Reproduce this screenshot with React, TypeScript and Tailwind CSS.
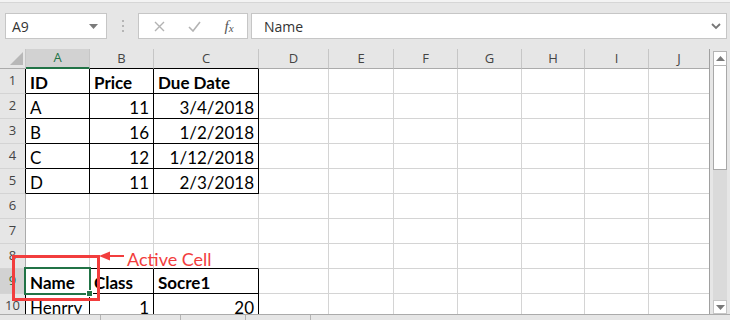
import React from 'react';

const COLS = ['A', 'B', 'C', 'D', 'E', 'F', 'G', 'H', 'I', 'J'];

type Cell = { v: string; right?: boolean };

const DATA: Record<number, Cell[]> = {
  1: [{ v: 'ID' }, { v: 'Price' }, { v: 'Due Date' }],
  2: [{ v: 'A' }, { v: '11', right: true }, { v: '3/4/2018', right: true }],
  3: [{ v: 'B' }, { v: '16', right: true }, { v: '1/2/2018', right: true }],
  4: [{ v: 'C' }, { v: '12', right: true }, { v: '1/12/2018', right: true }],
  5: [{ v: 'D' }, { v: '11', right: true }, { v: '2/3/2018', right: true }],
  9: [{ v: 'Name' }, { v: 'Class' }, { v: 'Socre1' }],
  10: [{ v: 'Henrry' }, { v: '1', right: true }, { v: '20', right: true }],
};

const BOLD_ROWS = [1, 9];
const TABLE_ROWS = [1, 2, 3, 4, 5, 9, 10];

function TopBar() {
  return (
    <div className="h-[49px] bg-[#e6e6e6] border-t-[2px] border-t-[#f3f3f3]">
      <div className="h-px bg-[#d6d6d6]" />
      {/* name box + formula bar */}
      <div className="flex items-start pt-[10px] pl-[5px]">
        <div className="flex h-[26px] w-[102px] items-center justify-between border border-[#c6c6c6] bg-white pl-[6px] pr-[8px]">
          <span className="text-[14px] text-[#333] font-['Open_Sans',sans-serif]">A9</span>
          <svg width="9" height="5" viewBox="0 0 9 5">
            <path d="M0 0 L9 0 L4.5 5 Z" fill="#7a7a7a" />
          </svg>
        </div>
        <div className="flex h-[26px] w-[31px] flex-col items-center justify-center gap-[3px]">
          <span className="h-[2px] w-[2px] bg-[#b5b5b5]" />
          <span className="h-[2px] w-[2px] bg-[#b5b5b5]" />
          <span className="h-[2px] w-[2px] bg-[#b5b5b5]" />
        </div>
        <div className="flex h-[26px] w-[110px] items-center border border-[#c6c6c6] bg-white">
          <div className="flex w-[38px] justify-center pl-[2px]">
            <svg width="11" height="11" viewBox="0 0 11 11">
              <path d="M1 1 L10 10 M10 1 L1 10" stroke="#b3b3b3" strokeWidth="1.4" />
            </svg>
          </div>
          <div className="flex w-[34px] justify-center">
            <svg width="13" height="11" viewBox="0 0 13 11">
              <path d="M1 6 L5 10 L12 1" stroke="#b3b3b3" strokeWidth="1.6" fill="none" />
            </svg>
          </div>
          <div className="flex w-[36px] justify-center font-['Liberation_Serif',serif] italic text-[#555]">
            <span className="text-[15px] leading-none">f</span>
            <span className="text-[11px] leading-none mt-[4px]">x</span>
          </div>
        </div>
        <div className="ml-[3px] flex h-[26px] w-[476px] items-center justify-between border border-[#c6c6c6] bg-white pl-[12px] pr-[5px]">
          <span className="text-[14px] text-[#333] font-['Open_Sans',sans-serif]">Name</span>
          <svg width="10" height="7" viewBox="0 0 10 7">
            <path d="M1 1 L5 5 L9 1" stroke="#777" strokeWidth="1.8" fill="none" />
          </svg>
        </div>
      </div>
    </div>
  );
}

function ColumnHeader() {
  return (
    <>
      <div className="relative h-[20px] border-r border-b border-r-[#c6c6c6] border-b-[#ababab] bg-[#e6e6e6]">
        <svg className="absolute left-[10px] top-[3px]" width="13" height="13" viewBox="0 0 13 13">
          <path d="M13 0 L13 13 L0 13 Z" fill="#b8b8b8" />
        </svg>
      </div>
      {COLS.map((c, i) => {
        const selected = c === 'A';
        const tableTop = c === 'B' || c === 'C';
        return (
          <div
            key={c}
            className={`flex h-[20px] items-center justify-center text-[13px] font-['Open_Sans',sans-serif] ${
              i === COLS.length - 1 ? '' : 'border-r border-r-[#c6c6c6]'
            } ${
              selected
                ? 'bg-[#d2d2d2] border-b-2 border-b-[#217346] text-[#217346]'
                : tableTop
                  ? 'bg-[#e6e6e6] border-b border-b-black text-[#444]'
                  : 'bg-[#e6e6e6] border-b border-b-[#ababab] text-[#444]'
            }`}
          >
            {c}
          </div>
        );
      })}
    </>
  );
}

function Row({ n }: { n: number }) {
  const cells = DATA[n] || [];
  const inTable = TABLE_ROWS.includes(n);
  const bold = BOLD_ROWS.includes(n);
  return (
    <>
      <div
        className={`flex h-[25px] items-center justify-center border-b border-b-[#d4d4d4] border-r text-[13px] font-['Open_Sans',sans-serif] ${
          inTable ? 'border-r-black' : 'border-r-[#ababab]'
        } ${n === 9 ? 'bg-[#d2d2d2] text-[#217346]' : 'bg-[#e6e6e6] text-[#444]'}`}
      >
        {n}
      </div>
      {COLS.map((c, i) => {
        const cell = i < 3 ? cells[i] : undefined;
        const black = inTable && i < 3;
        const rightBlack = black;
        const bottomBlack = black || (n === 8 && i < 3);
        return (
          <div
            key={c}
            className={`flex h-[25px] items-end overflow-hidden whitespace-nowrap border-b px-[4px] text-[17px] leading-[20px] text-black font-['Lato','Liberation_Sans',sans-serif] ${
              i === COLS.length - 1 ? '' : 'border-r'
            } ${rightBlack ? 'border-r-black' : 'border-r-[#d4d4d4]'} ${
              bottomBlack ? 'border-b-black' : 'border-b-[#d4d4d4]'
            } ${cell?.right ? 'justify-end' : 'justify-start'} ${bold ? 'font-bold' : ''}`}
          >
            {cell?.v}
          </div>
        );
      })}
    </>
  );
}

function Scrollbar() {
  return (
    <div className="ml-[3px] flex h-full w-[14px] flex-col pt-[2px]">
      <div className="flex h-[15px] items-center justify-center border border-[#b4b4b4] bg-white">
        <svg width="9" height="5" viewBox="0 0 9 5">
          <path d="M0 5 L9 5 L4.5 0 Z" fill="#7a7a7a" />
        </svg>
      </div>
      <div className="h-[104px] border border-t-0 border-[#a8a8a8] bg-white" />
      <div className="flex-1 bg-[#dadada]" />
      <div className="flex h-[14px] items-center justify-center border border-[#c6c6c6] bg-white">
        <svg width="9" height="5" viewBox="0 0 9 5">
          <path d="M0 0 L9 0 L4.5 5 Z" fill="#7a7a7a" />
        </svg>
      </div>
    </div>
  );
}

export default function App() {
  const rows = Array.from({ length: 10 }, (_, i) => i + 1);
  return (
    <div className="relative h-[320px] w-[730px] overflow-hidden bg-[#e6e6e6] select-none">
      <TopBar />

      <div className="flex h-[265px]">
        <div className="h-[265px] w-[710px] overflow-hidden border-r border-r-[#a0a0a0] bg-white">
          <div className="grid grid-cols-[26px_64px_64px_105px_70px_65px_64px_64px_63px_64px_60px]">
            <ColumnHeader />
            {rows.map((n) => (
              <Row key={n} n={n} />
            ))}
          </div>
        </div>
        <Scrollbar />
      </div>

      {/* sheet tab strip edge */}
      <div className="flex h-[6px] border-t border-t-[#ababab] bg-[#e6e6e6]">
        <div className="w-[101px] border-r border-r-[#b4b4b4]" />
        <div className="w-[80px] border-r border-r-[#b4b4b4]" />
        <div className="w-[65px] border-r border-r-[#b4b4b4]" />
        <div className="w-[65px] border-r border-r-[#b4b4b4]" />
      </div>

      {/* active cell A9 */}
      <div className="absolute left-[24px] top-[267px] h-[28px] w-[67px] border-2 border-[#217346]">
        <div className="absolute -bottom-[4px] -right-[4px] h-[7px] w-[7px] border border-white bg-[#217346]" />
      </div>

      {/* annotation */}
      <div className="absolute left-[12px] top-[255px] h-[46px] w-[88px] border-[3px] border-[#f23d3d]" />
      <svg className="absolute left-[99px] top-[251px]" width="26" height="10" viewBox="0 0 26 10">
        <path d="M0 5 L11 0.5 L11 9.5 Z" fill="#f23d3d" />
        <path d="M8 5 L25 5" stroke="#f23d3d" strokeWidth="2" />
      </svg>
      <div className="absolute left-[127px] top-[250px] text-[18px] leading-[18px] text-[#f23d3d] font-['Lato','Liberation_Sans',sans-serif]">
        Active Cell
      </div>
    </div>
  );
}
